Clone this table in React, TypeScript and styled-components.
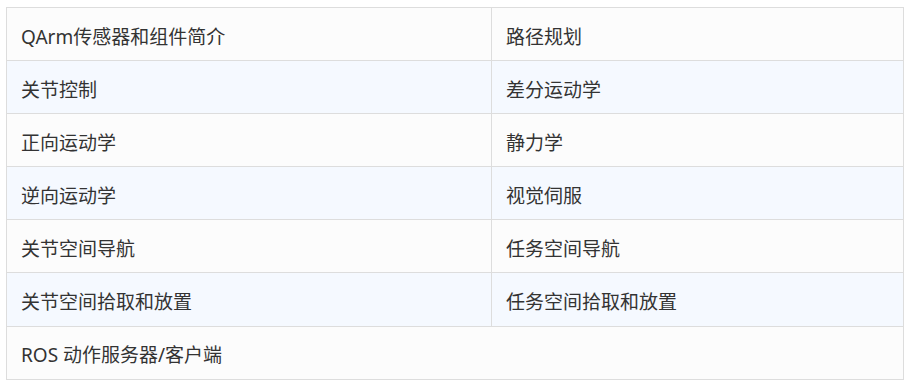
import styled, { createGlobalStyle } from 'styled-components';

const GlobalStyle = createGlobalStyle`
	body {
		margin: 0;
		background: #ffffff;
		font-family: 'Noto Sans', 'Noto Sans CJK SC', sans-serif;
	}
`;

const Wrapper = styled.div`
	padding: 7px 6px;
`;

const Table = styled.table`
	width: 898px;
	border-collapse: collapse;
	table-layout: fixed;
	color: #333333;
	font-size: 19px;
	.col-left {
		width: 485px;
	}
`;

const Row = styled.tr<{ $striped: boolean }>`
	height: 53.1px;
	background-color: ${(props) => (props.$striped ? '#f5f9ff' : '#fcfcfc')};
`;

const Cell = styled.td`
	border: 1px solid #dddddd;
	padding: 5px 14px 0;
	vertical-align: middle;
	line-height: 26px;
	white-space: nowrap;
`;

const rows: [string, string?][] = [
	['QArm传感器和组件简介', '路径规划'],
	['关节控制', '差分运动学'],
	['正向运动学', '静力学'],
	['逆向运动学', '视觉伺服'],
	['关节空间导航', '任务空间导航'],
	['关节空间拾取和放置', '任务空间拾取和放置'],
	['ROS 动作服务器/客户端'],
];

const App = () => {
	return (
		<Wrapper>
			<GlobalStyle />
			<Table>
				<colgroup>
					<col className='col-left' />
					<col />
				</colgroup>
				<tbody>
					{rows.map((item, index) => (
						<Row key={index} $striped={index % 2 === 1}>
							{item[1] !== undefined ? (
								<>
									<Cell>{item[0]}</Cell>
									<Cell>{item[1]}</Cell>
								</>
							) : (
								<Cell colSpan={2}>{item[0]}</Cell>
							)}
						</Row>
					))}
				</tbody>
			</Table>
		</Wrapper>
	);
};

export default App;
